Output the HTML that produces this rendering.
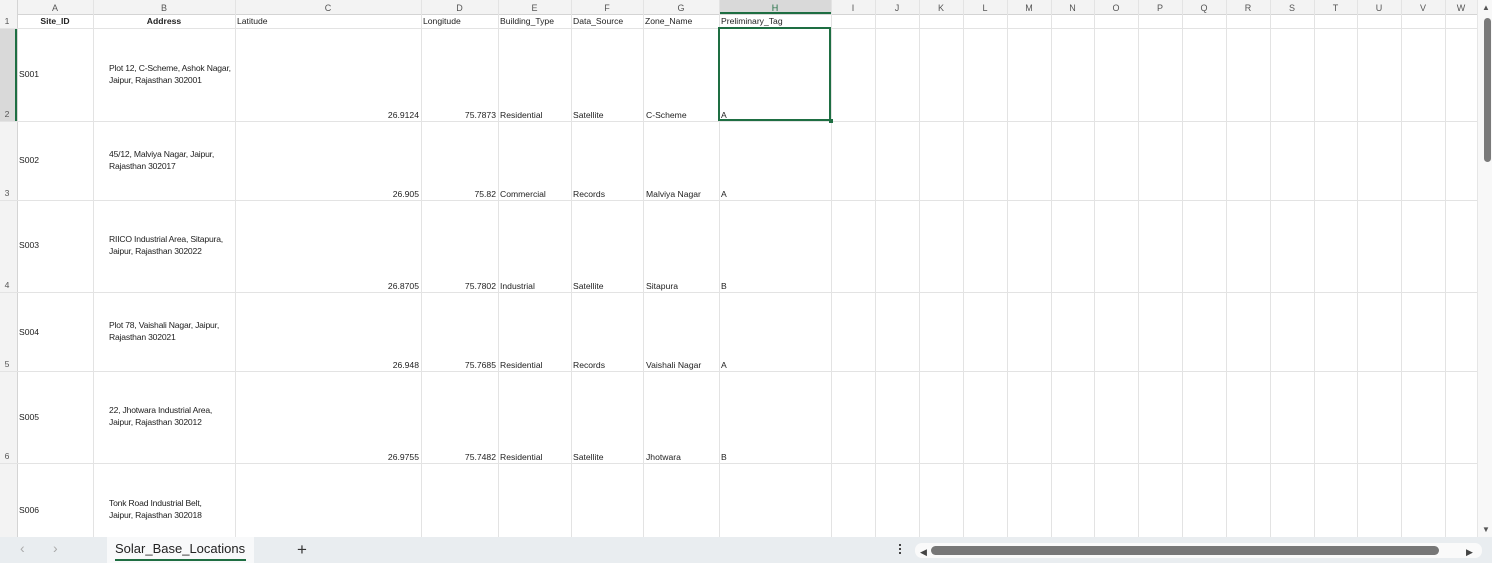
<!DOCTYPE html>
<html><head><style>
body{margin:0;width:1492px;height:563px;overflow:hidden;background:#fff;font-family:"Liberation Sans",sans-serif;font-size:8.6px;color:#222;position:relative}
div{position:absolute;white-space:nowrap;line-height:12px}
.v{top:0;width:1px;height:537px;background:#e3e3e3}
.h{left:0;width:1477px;height:1px;background:#e3e3e3}
.ch{top:2px;color:#555;text-align:center;font-size:9px}
.rh{left:0;width:14px;text-align:center;color:#555}
.r{text-align:right}
.b{font-weight:bold;text-align:center}
</style></head><body>
<div style="left:0;top:0;width:1477px;height:14px;background:#f3f3f3;border-bottom:1px solid #d4d4d4"></div>
<div style="left:0;top:0;width:17px;height:537px;background:#f3f3f3;border-right:1px solid #d4d4d4"></div>
<div style="left:719px;top:0;width:112px;height:14px;background:#d9d9d9;border-bottom:2px solid #1e6e42;box-sizing:border-box"></div>
<div style="left:0;top:28px;width:17px;height:93px;background:#d9d9d9;border-right:2px solid #1e6e42;box-sizing:border-box"></div>
<script>
var xs=[93,235,421,498,571,643,719,831,875,919,963,1007,1051,1094,1138,1182,1226,1270,1314,1357,1401,1445];
xs.forEach(function(x){document.write('<div class="v" style="left:'+x+'px"></div>')});
[28,121,200,292,371,463].forEach(function(y){document.write('<div class="h" style="top:'+y+'px"></div>')});
</script>
<div class="ch" style="left:17px;width:76px">A</div><div class="ch" style="left:93px;width:142px">B</div><div class="ch" style="left:235px;width:186px">C</div><div class="ch" style="left:421px;width:77px">D</div><div class="ch" style="left:498px;width:73px">E</div><div class="ch" style="left:571px;width:72px">F</div><div class="ch" style="left:643px;width:76px">G</div><div class="ch" style="left:719px;width:112px;color:#1e6e42">H</div><div class="ch" style="left:831px;width:44px">I</div><div class="ch" style="left:875px;width:44px">J</div><div class="ch" style="left:919px;width:44px">K</div><div class="ch" style="left:963px;width:44px">L</div><div class="ch" style="left:1007px;width:44px">M</div><div class="ch" style="left:1051px;width:43px">N</div><div class="ch" style="left:1094px;width:44px">O</div><div class="ch" style="left:1138px;width:44px">P</div><div class="ch" style="left:1182px;width:44px">Q</div><div class="ch" style="left:1226px;width:44px">R</div><div class="ch" style="left:1270px;width:44px">S</div><div class="ch" style="left:1314px;width:43px">T</div><div class="ch" style="left:1357px;width:44px">U</div><div class="ch" style="left:1401px;width:44px">V</div><div class="ch" style="left:1445px;width:32px">W</div>
<div class="rh" style="top:15px">1</div><div class="rh" style="top:108px">2</div><div class="rh" style="top:187px">3</div><div class="rh" style="top:279px">4</div><div class="rh" style="top:358px">5</div><div class="rh" style="top:450px">6</div>
<div class="b" style="left:17px;width:76px;top:15px">Site_ID</div><div class="b" style="left:93px;width:142px;top:15px">Address</div>
<div style="left:237px;top:15px">Latitude</div><div style="left:423px;top:15px">Longitude</div><div style="left:500px;top:15px">Building_Type</div><div style="left:573px;top:15px">Data_Source</div><div style="left:645px;top:15px">Zone_Name</div><div style="left:721px;top:15px">Preliminary_Tag</div>

<div style="left:19px;top:68px">S001</div><div style="left:109px;top:62px;letter-spacing:-0.2px">Plot 12, C-Scheme, Ashok Nagar,<br>Jaipur, Rajasthan 302001</div>
<div class="r" style="left:235px;width:184px;top:109px">26.9124</div><div class="r" style="left:421px;width:75px;top:109px">75.7873</div><div style="left:500px;top:109px">Residential</div><div style="left:573px;top:109px">Satellite</div><div style="left:646px;top:109px">C-Scheme</div><div style="left:721px;top:109px">A</div>

<div style="left:19px;top:154px">S002</div><div style="left:109px;top:148px;letter-spacing:-0.2px">45/12, Malviya Nagar, Jaipur,<br>Rajasthan 302017</div>
<div class="r" style="left:235px;width:184px;top:188px">26.905</div><div class="r" style="left:421px;width:75px;top:188px">75.82</div><div style="left:500px;top:188px">Commercial</div><div style="left:573px;top:188px">Records</div><div style="left:646px;top:188px">Malviya Nagar</div><div style="left:721px;top:188px">A</div>

<div style="left:19px;top:239px">S003</div><div style="left:109px;top:233px;letter-spacing:-0.2px">RIICO Industrial Area, Sitapura,<br>Jaipur, Rajasthan 302022</div>
<div class="r" style="left:235px;width:184px;top:280px">26.8705</div><div class="r" style="left:421px;width:75px;top:280px">75.7802</div><div style="left:500px;top:280px">Industrial</div><div style="left:573px;top:280px">Satellite</div><div style="left:646px;top:280px">Sitapura</div><div style="left:721px;top:280px">B</div>

<div style="left:19px;top:326px">S004</div><div style="left:109px;top:319px;letter-spacing:-0.2px">Plot 78, Vaishali Nagar, Jaipur,<br>Rajasthan 302021</div>
<div class="r" style="left:235px;width:184px;top:359px">26.948</div><div class="r" style="left:421px;width:75px;top:359px">75.7685</div><div style="left:500px;top:359px">Residential</div><div style="left:573px;top:359px">Records</div><div style="left:646px;top:359px">Vaishali Nagar</div><div style="left:721px;top:359px">A</div>

<div style="left:19px;top:411px">S005</div><div style="left:109px;top:404px;letter-spacing:-0.2px">22, Jhotwara Industrial Area,<br>Jaipur, Rajasthan 302012</div>
<div class="r" style="left:235px;width:184px;top:451px">26.9755</div><div class="r" style="left:421px;width:75px;top:451px">75.7482</div><div style="left:500px;top:451px">Residential</div><div style="left:573px;top:451px">Satellite</div><div style="left:646px;top:451px">Jhotwara</div><div style="left:721px;top:451px">B</div>

<div style="left:19px;top:504px">S006</div><div style="left:109px;top:497px;letter-spacing:-0.2px">Tonk Road Industrial Belt,<br>Jaipur, Rajasthan 302018</div>

<div style="left:718px;top:27px;width:113px;height:94px;border:2px solid #1e6e42;box-sizing:border-box"></div>
<div style="left:829px;top:119px;width:4px;height:4px;background:#1e6e42"></div>

<div style="left:1477px;top:0;width:15px;height:537px;background:#f8f8f8;border-left:1px solid #e6e6e6"></div>
<div style="left:1484px;top:18px;width:7px;height:144px;background:#7a7a7a;border-radius:4px"></div>
<div style="left:1482px;top:2px;font-size:8px;color:#555">▲</div>
<div style="left:1482px;top:524px;font-size:8px;color:#555">▼</div>

<div style="left:0;top:537px;width:1492px;height:26px;background:#e9edf0"></div>
<div style="left:20px;top:542px;font-size:14px;color:#aaa">‹</div>
<div style="left:53px;top:542px;font-size:14px;color:#aaa">›</div>
<div style="left:107px;top:537px;width:147px;height:26px;background:#f8f9fa"></div>
<div style="left:115px;top:541px;font-size:13px;line-height:16px;color:#222">Solar_Base_Locations</div>
<div style="left:115px;top:559px;width:131px;height:2px;background:#1e6e42"></div>
<div style="left:297px;top:540px;font-size:17px;line-height:20px;color:#333">+</div>
<div style="left:899px;top:544px;width:2px;height:2px;background:#444;box-shadow:0 4px #444,0 8px #444"></div>
<div style="left:915px;top:543px;width:567px;height:15px;background:#fafafa;border-radius:7px"></div>
<div style="left:920px;top:546px;font-size:9px;color:#444">◀</div>
<div style="left:931px;top:546px;width:508px;height:9px;background:#777;border-radius:5px"></div>
<div style="left:1466px;top:546px;font-size:9px;color:#444">▶</div>
</body></html>
